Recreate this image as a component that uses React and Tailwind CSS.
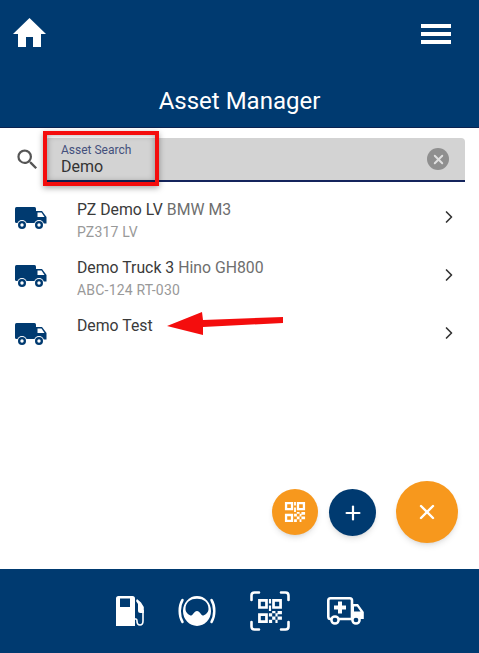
import { ChevronRight, Plus, X } from "lucide-react";
import { MdSearch } from "react-icons/md";

const assets = [
  { name: "PZ Demo LV", model: "BMW M3", sub: "PZ317 LV" },
  { name: "Demo Truck 3", model: "Hino GH800", sub: "ABC-124 RT-030" },
  { name: "Demo Test", model: "", sub: "" },
];

const HomeIcon = ({ className }) => (
  <svg viewBox="0 0 33 29" className={className} fill="currentColor">
    <path d="M16.500 0L33 16H28V29H20V19H13V29H5V16H0Z" />
  </svg>
);

const TruckIcon = ({ className }) => (
  <svg viewBox="0 0 32 23" className={className}>
    <rect x="0" y="0" width="21" height="16" rx="1.500" fill="#003a70" />
    <path d="M21 4H27L31.500 10V16.500H21Z" fill="#003a70" />
    <path d="M22.500 5.500H26.500L29.500 10H22.500Z" fill="#fff" />
    <circle cx="7" cy="18" r="5" fill="#fff" />
    <circle cx="7" cy="18" r="4" fill="#003a70" />
    <circle cx="7" cy="18" r="1.700" fill="#fff" />
    <circle cx="24" cy="18" r="5" fill="#fff" />
    <circle cx="24" cy="18" r="4" fill="#003a70" />
    <circle cx="24" cy="18" r="1.700" fill="#fff" />
  </svg>
);

const QrIcon = ({ className }) => (
  <svg viewBox="0 0 24 24" className={className} fill="currentColor">
    <path fillRule="evenodd" d="M1 1h9v9H1zM3.500 3.500v4h4v-4zM14 1h9v9h-9zM16.500 3.500v4h4v-4zM1 14h9v9H1zM3.500 16.500v4h4v-4z" />
    <path d="M11 1h2v4h-2zM11 7h2v5h-2zM14 12h3v2h-3zM19 12h4v3h-4zM11 14h3v3h-3zM17 14h2v3h-2zM14 17h3v3h-3zM19 17h4v3h-4zM11 20h3v3h-3zM17 20h2v3h-2z" />
  </svg>
);

const PumpIcon = ({ className }) => (
  <svg viewBox="0 0 28 30" className={className} fill="none">
    <path fillRule="evenodd" d="M2.500 0H16.500Q19 0 19 2.500V30H0V2.500Q0 0 2.500 0ZM4 2.500V11H14V2.500Z" fill="currentColor" />
    <path d="M19 23H20Q21 23 21 25Q21 29 24 29Q27 29 27 25V14" stroke="currentColor" strokeWidth="1.600" />
    <path d="M21 3L25 6.500L27.800 11V17H24.500Q22 17 22 14.500V8L20 5Z" fill="currentColor" />
  </svg>
);

const BrakeIcon = ({ className }) => (
  <svg viewBox="0 0 40 32" className={className} fill="none">
    <path d="M5.500 5C1.800 11 1.800 21 5.500 27M34.500 5C38.200 11 38.200 21 34.500 27" stroke="currentColor" strokeWidth="2.500" strokeLinecap="round" />
    <ellipse cx="20" cy="16" rx="14" ry="15" fill="currentColor" />
    <path d="M8.500 14C8.500 7 13.500 3.800 20 3.800C26.500 3.800 31.500 7 31.500 14C31.500 18 27.500 20.500 25.800 20.500C24 20.500 23 16 20 16C17 16 16 20.500 14.200 20.500C12.500 20.500 8.500 18 8.500 14Z" fill="#003a70" />
  </svg>
);

const ScanIcon = ({ className }) => (
  <svg viewBox="0 0 40 40" className={className} fill="none">
    <path d="M1.500 9V4.500Q1.500 1.500 4.500 1.500H9M31 1.500H35.500Q38.500 1.500 38.500 4.500V9M38.500 31V35.500Q38.500 38.500 35.500 38.500H31M9 38.500H4.500Q1.500 38.500 1.500 35.500V31" stroke="currentColor" strokeWidth="2.600" strokeLinecap="round" />
    <svg x="7" y="7" width="26" height="26" viewBox="0 0 24 24" fill="currentColor">
      <path fillRule="evenodd" d="M1 1h9v9H1zM3.500 3.500v4h4v-4zM14 1h9v9h-9zM16.500 3.500v4h4v-4zM1 14h9v9H1zM3.500 16.500v4h4v-4z" />
      <path d="M11 1h2v4h-2zM11 7h2v5h-2zM14 12h3v2h-3zM19 12h4v3h-4zM11 14h3v3h-3zM17 14h2v3h-2zM14 17h3v3h-3zM19 17h4v3h-4zM11 20h3v3h-3zM17 20h2v3h-2z" />
    </svg>
  </svg>
);

const AmbulanceIcon = ({ className }) => (
  <svg viewBox="0 0 37 28" className={className} fill="none">
    <path d="M4 22H3.500Q1.300 22 1.300 19.800V3.500Q1.300 1.300 3.500 1.300H22.800Q25 1.300 25 3.500V22H12" stroke="currentColor" strokeWidth="2.600" />
    <path fillRule="evenodd" d="M25 7H31L36.800 15V22H25ZM27 9.500V14.500H33.500L30 9.500Z" fill="currentColor" />
    <path d="M11 4.500H15V8.500H19V12.500H15V16.500H11V12.500H7V8.500H11Z" fill="currentColor" />
    <circle cx="8" cy="23" r="3.600" fill="#003a70" stroke="currentColor" strokeWidth="2.500" />
    <circle cx="29" cy="23" r="3.600" fill="#003a70" stroke="currentColor" strokeWidth="2.500" />
  </svg>
);

const AssetRow = ({ asset }) => (
  <div className="flex h-[58px] items-start pl-[15px] pr-[20px]">
    <TruckIcon className="mt-[16px] h-[23px] w-[32px] shrink-0" />
    <div className="ml-[30px] flex-1 pt-[8px]">
      <div className="text-[15.800px] leading-[22px] text-[#3a3a3a]">
        {asset.name} <span className="text-[#6e6e6e]">{asset.model}</span>
      </div>
      {asset.sub && <div className="mt-[2px] text-[14px] leading-[18px] tracking-[0.2px] text-[#999]">{asset.sub}</div>}
    </div>
    <ChevronRight className="mt-[16px] h-[20px] w-[20px] shrink-0 text-[#333]" strokeWidth={2} />
  </div>
);

export default function App() {
  return (
    <div className="relative flex h-[653px] w-[479px] flex-col overflow-hidden bg-white font-['Roboto',sans-serif]">
      <header className="h-[128px] shrink-0 border-b border-[#0b2350] bg-[#003a70] px-[13px] pt-[18px]">
        <div className="flex items-start justify-between">
          <HomeIcon className="h-[29px] w-[33px] text-white" />
          <div className="mr-[15px] mt-[6px] flex w-[30px] flex-col gap-[4px]">
            <div className="h-[4px] bg-white" />
            <div className="h-[4px] bg-white" />
            <div className="h-[4px] bg-white" />
          </div>
        </div>
        <h1 className="mt-[39px] text-center text-[24px] leading-[30px] text-white">Asset Manager</h1>
      </header>

      <div className="flex h-[55px] shrink-0 items-start pl-[14px] pr-[14px] pt-[10px]">
        <MdSearch className="mt-[8px] h-[27px] w-[27px] shrink-0 text-[#555]" />
        <div className="ml-[4px] flex h-[44px] flex-1 items-center rounded-t-[4px] border-b-2 border-[#14245c] bg-[#d3d3d3] pl-[16px] pr-[16px]">
          <div className="flex-1">
            <div className="text-[12px] leading-[14px] text-[#44507c]">Asset Search</div>
            <div className="text-[16px] leading-[19px] text-[#333]">Demo</div>
          </div>
          <div className="flex h-[22px] w-[22px] items-center justify-center rounded-full bg-[#8f8f8f]">
            <X className="h-[15px] w-[15px] text-[#e0e0e0]" strokeWidth={3} />
          </div>
        </div>
      </div>

      <main className="relative flex-1">
        <div className="pt-[8px]">
          {assets.map((a) => (
            <AssetRow key={a.name} asset={a} />
          ))}
        </div>

        <button className="absolute left-[272px] top-[306px] flex h-[46px] w-[46px] items-center justify-center rounded-full bg-[#f7981d] text-white shadow-md">
          <QrIcon className="h-[22px] w-[22px]" />
        </button>
        <button className="absolute left-[329px] top-[306px] flex h-[47px] w-[47px] items-center justify-center rounded-full bg-[#003a70] text-white shadow-md">
          <Plus className="h-[22px] w-[22px]" strokeWidth={2.400} />
        </button>
        <button className="absolute left-[396px] top-[298px] flex h-[62px] w-[62px] items-center justify-center rounded-full bg-[#f7981d] text-white shadow-md">
          <X className="h-[24px] w-[24px]" strokeWidth={2.400} />
        </button>
      </main>

      <footer className="flex h-[84px] shrink-0 items-center justify-center gap-[33px] bg-[#003a70] text-white">
        <PumpIcon className="h-[30px] w-[28px]" />
        <BrakeIcon className="h-[32px] w-[40px]" />
        <ScanIcon className="h-[40px] w-[40px]" />
        <AmbulanceIcon className="ml-[4px] h-[28px] w-[37px]" />
      </footer>

      {/* annotations on top of the screenshot */}
      <div className="pointer-events-none absolute left-[43px] top-[131px] h-[55px] w-[116px] border-[4px] border-[#f40d0d] shadow-[0_2px_6px_rgba(0,0,0,0.35),inset_0_0_6px_rgba(0,0,0,0.35)]" />
      <svg className="pointer-events-none absolute left-[165px] top-[308px] h-[30px] w-[120px]" viewBox="0 0 120 30">
        <path d="M2 18L37 4L38 12L118 9V15L38 19V27Z" fill="#f40d0d" />
      </svg>
    </div>
  );
}
